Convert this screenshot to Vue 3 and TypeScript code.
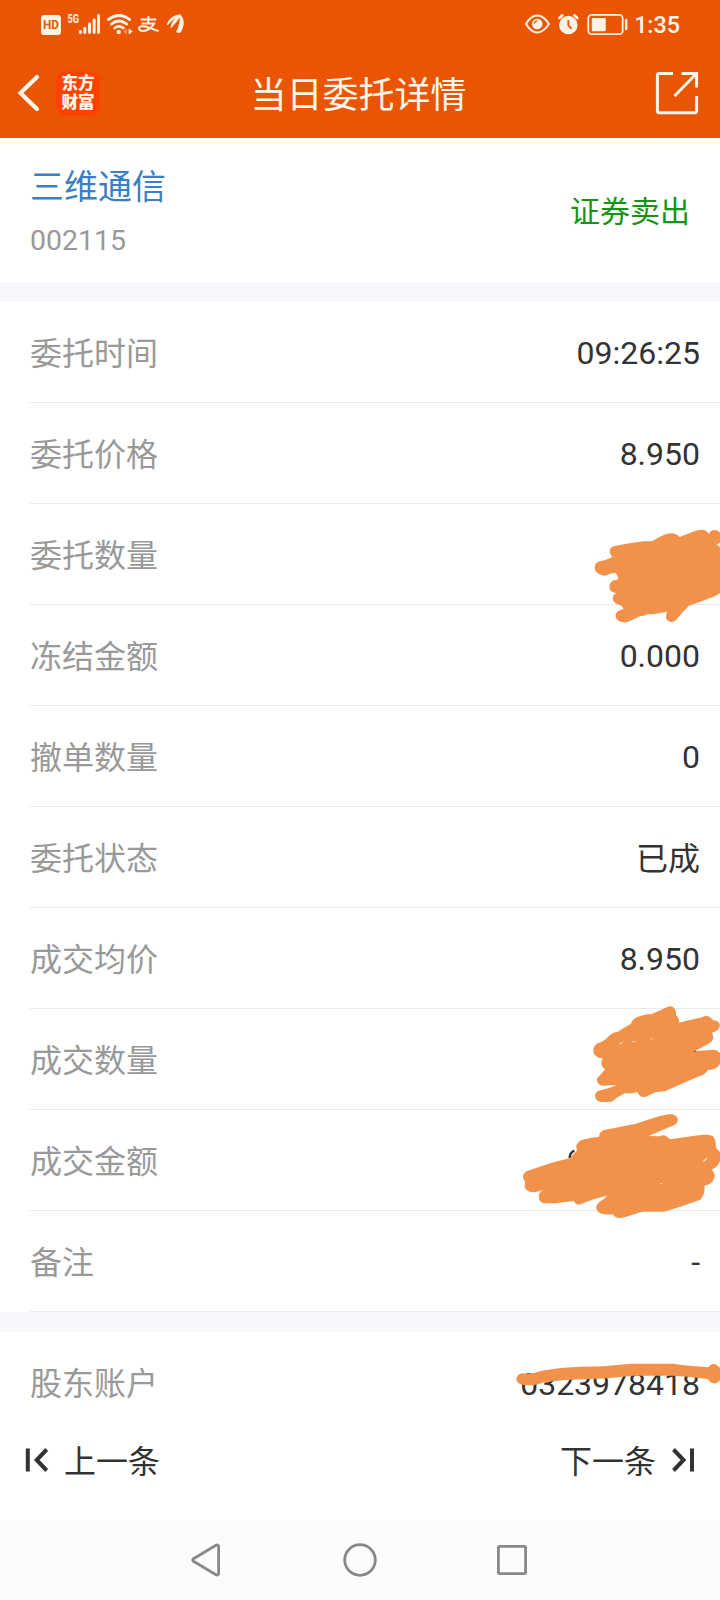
<script setup lang="ts">
interface DetailRow {
  label: string
  value: string
}

const rows: DetailRow[] = [
  { label: '委托时间', value: '09:26:25' },
  { label: '委托价格', value: '8.950' },
  { label: '委托数量', value: '' },
  { label: '冻结金额', value: '0.000' },
  { label: '撤单数量', value: '0' },
  { label: '委托状态', value: '已成' },
  { label: '成交均价', value: '8.950' },
  { label: '成交数量', value: '' },
  { label: '成交金额', value: '' },
  { label: '备注', value: '-' },
]

const isChinese = (text: string): boolean => /[\u4e00-\u9fff]/.test(text)
</script>

<template>
  <div class="screen">
    <header class="top">
      <div class="status">
        <svg class="status-left" width="150" height="24" viewBox="40 12 150 24" fill="none" stroke="#fff3e6">
          <rect x="41" y="15" width="20" height="20" rx="3" fill="#fff3e6" stroke="none" />
          <text x="51" y="29.200" class="hd" text-anchor="middle" textLength="16" lengthAdjust="spacingAndGlyphs">HD</text>
          <text x="67.500" y="22.800" class="five" textLength="11.500" lengthAdjust="spacingAndGlyphs">5G</text>
          <path d="M80.500 31.500v1M85 28.500v4M89.700 24v8.500M94.300 20v12.500M98.700 15.500v17" stroke-width="3" stroke-linecap="round" />
          <path d="M108.500 19.500Q119 11.500 130 19.500M111.700 24Q119 18 127 24M115 28Q119 24.800 123.500 28" stroke-width="2.800" stroke-linecap="round" />
          <circle cx="119" cy="32" r="2.200" fill="#fff3e6" stroke="none" />
          <path d="M123.500 31.500l3.500-3v6z" fill="#ff9568" stroke="none" />
          <path d="M129 28.500v6l4-3z" fill="#fff3e6" stroke="none" />
          <path d="M141 19.500h15.500M148.700 16v7.500M142 23.500h12.500C152.500 27.500 147 31.500 142.500 31C138 30 138.500 26.500 143 26.300C149 26.200 153 30 159 31" stroke-width="2" />
          <path d="M168 25C168 20 174 15.500 180 15C176 17 171.500 20.500 168 25zM171.500 27.500C172.500 21 177 16 181.500 15C178.500 19 176 23 171.500 27.500zM177 32C180 27 181 20 180.800 15C185 20 184.500 27 180.500 32.500z" fill="#fff3e6" stroke-width="1" />
        </svg>
        <svg class="status-right" width="106" height="24" viewBox="524 12 106 24" fill="none" stroke="#fff3e6">
          <path d="M526 24Q531 15.500 537.300 15.500T549 24Q543.500 32.500 537.300 32.500T526 24z" stroke-width="2" />
          <circle cx="537.300" cy="24" r="5.300" fill="#fff3e6" stroke="none" />
          <path d="M534.200 23.500q.5-2.500 3-2.700" stroke="#ea5504" stroke-width="1.200" />
          <circle cx="568.500" cy="25" r="9.300" fill="#fff3e6" stroke="none" />
          <path d="M568.500 20v5.500l3.200 3.200" stroke="#ea5504" stroke-width="1.800" />
          <path d="M559.500 18l3-2.700M577.500 18l-3-2.700" stroke-width="2.600" stroke-linecap="round" />
          <rect x="588.500" y="14.800" width="34.500" height="19.400" rx="3.500" stroke-width="1.800" />
          <rect x="592" y="18" width="14" height="13.200" rx="1" fill="#fff3e6" stroke="none" />
          <path d="M626.500 20v9" stroke-width="2.400" stroke-linecap="round" />
        </svg>
        <span class="clock">1:35</span>
      </div>
      <div class="navbar">
        <div class="nav-left">
          <svg width="24" height="40" viewBox="16 73 24 40" fill="none" stroke="#fff6ec" stroke-width="4.200">
            <path d="M37 77L20.500 93L37 109" stroke-linecap="round" />
          </svg>
          <div class="logo"><span>东方</span><span>财富</span></div>
        </div>
        <h1>当日委托详情</h1>
        <svg class="share" width="44" height="44" viewBox="655 71 44 44" fill="none" stroke="#fff6ec" stroke-width="3">
          <path d="M673 73.500H659q-1.600 0-1.600 1.600v36q0 1.600 1.600 1.600h36q1.600 0 1.600-1.600V96M681.500 73.500h15.100v14M674.500 96l21.500-22" />
        </svg>
      </div>
    </header>

    <section class="stock">
      <div class="identity">
        <div class="name">三维通信</div>
        <div class="code">002115</div>
      </div>
      <div class="side">证券卖出</div>
    </section>

    <section class="list">
      <div v-for="row in rows" :key="row.label" class="row">
        <span class="label">{{ row.label }}</span>
        <span class="value" :class="{ hanzi: isChinese(row.value) }">{{ row.value }}</span>
      </div>
    </section>

    <section class="account">
      <span class="label">股东账户</span>
      <span class="value number">0323978418</span>
    </section>

    <footer class="pager">
      <div class="page-link">
        <svg width="24" height="26" viewBox="25 1447 24 26" fill="none" stroke="#333" stroke-width="4">
          <path d="M27.800 1448.500v23M46.700 1449.500L36.700 1460l10 10.500" />
        </svg>
        <span>上一条</span>
      </div>
      <div class="page-link">
        <span>下一条</span>
        <svg width="24" height="26" viewBox="671 1447 24 26" fill="none" stroke="#333" stroke-width="4">
          <path d="M692 1448.500v23M673.500 1449.500l10 10.500-10 10.500" />
        </svg>
      </div>
    </footer>

    <nav class="system">
      <svg width="720" height="80" viewBox="0 1520 720 80" fill="none" stroke="#888" stroke-width="2.800" stroke-linejoin="round">
        <path d="M193.500 1558.700L216 1545.300q2.600-1 2.600 1.500v26.400q0 2.500-2.600 1.500L193.500 1561.300q-1.600-1.300 0-2.600z" />
        <circle cx="360" cy="1560" r="15.300" />
        <rect x="498.400" y="1546.400" width="27.200" height="27.200" rx="1.500" />
      </svg>
    </nav>

    <!-- Marker strokes hiding private figures -->
    <svg class="marker" width="720" height="1600" viewBox="0 0 720 1600">
      <g transform="translate(580 500) scale(.33333)">
        <path d="M104 138Q150 129 190 124H216Q238 110 258 102Q286 94 299 111L343 94Q375 82 386 102Q394 87 408 91Q420 94 420 100V280Q405 290 389 295L327 317Q305 338 289 359Q275 372 261 360Q254 350 262 335Q240 338 219 343H202Q190 350 181 348L155 361Q137 372 118 364Q103 355 108 340Q112 331 131 327Q124 314 111 313Q98 306 98 294Q99 284 109 279Q90 278 88 261Q88 240 112 239Q119 238 107 218L90 221Q76 230 67 226Q43 220 44 201Q46 184 65 182Q75 182 97 171Q88 162 89 151Q92 140 104 138z" />
        <path class="gap" d="M420 128l-10 6 10 8z" />
      </g>
      <g transform="translate(500 990) scale(.33333)">
        <path d="M392 102Q396 86 420 78Q439 72 456 72L503 50Q523 45 528 66V76Q539 86 537 98Q570 90 606 82Q626 70 639 91Q657 91 660 106Q658 124 636 128Q643 143 636 153Q629 161 583 183L635 180Q650 177 660 190V221Q652 239 624 240Q615 254 600 258Q542 282 495 304Q478 306 466 307L441 319Q420 326 412 306Q400 311 374 310L348 325Q340 337 325 336H300Q284 330 285 315Q288 302 305 300Q325 296 350 285Q327 286 314 287Q294 288 291 272Q289 264 300 256L316 238Q304 232 304 218Q304 210 309 205Q287 205 281 188Q277 169 293 160Q311 155 327 138Q340 126 352 126Q372 113 392 102z" />
        <path d="M209 504q0-16 14-22" fill="none" stroke="#333" stroke-width="7" />
        <path d="M298 433Q304 420 324 418L407 401L477 379L510 372Q532 373 534 391Q530 407 510 410L446 438L480 439Q495 430 509 448L595 436Q621 431 638 438Q648 446 648 474L660 486V512Q656 529 635 539Q652 554 638 574Q630 584 613 587Q618 608 601 629L550 647L492 665H427L376 681Q346 690 339 673Q308 676 294 665Q281 651 298 636Q308 630 323 617Q280 625 242 643Q228 646 221 633L165 640H132Q116 636 116 617Q118 606 130 600L110 605Q88 611 75 595Q72 584 76 576Q65 562 71 552Q76 543 90 540L155 518L210 504L231 481Q223 462 244 450Q270 442 298 440z" />
        <path class="gap" d="M354 161l18-6-8 6zM392 153l18 2-9 2zM449 148l12-6-7 6zM606 515l18-15-8 12zM480 579l7 0-4 5z" />
        <path d="M582 185l2-4 6 3z" class="ink" />
      </g>
      <g transform="translate(500 1300) scale(.33333)">
        <path d="M66 220Q92 224 125 212Q180 202 241 200L310 199L395 191H520Q545 196 569 197L625 202Q633 188 647 193L660 203V241Q647 256 632 247L623 237L572 231L520 227H400L320 235Q295 237 270 237L195 240L130 247Q110 258 70 255Q50 251 49 237Q51 223 66 220z" />
      </g>
    </svg>
  </div>
</template>

<style>
body {
  margin: 0;
}
</style>

<style scoped>
.screen {
  position: relative;
  display: flex;
  flex-direction: column;
  width: 720px;
  height: 1600px;
  overflow: hidden;
  background: #fff;
  color: #333;
  font-family: Roboto, "Noto Sans CJK SC", sans-serif;
}
.top {
  height: 138px;
  background: #ea5504;
  color: #fff6ec;
}
.status {
  display: flex;
  align-items: center;
  height: 48px;
  padding: 0 40px;
}
.status-left {
  margin-right: 335px;
}
.clock {
  padding-top: 2px;
  margin-left: 4px;
  font-size: 23.3px;
  font-weight: 500;
  line-height: 50px;
}
.hd {
  font: 700 12.5px Roboto, sans-serif;
  fill: #ea5504;
  stroke: none;
}
.five {
  font: 700 12.5px Roboto, sans-serif;
  fill: #fff3e6;
  stroke: none;
}
.navbar {
  display: grid;
  grid-template-columns: 1fr auto 1fr;
  align-items: center;
  height: 90px;
  padding: 0 21px 0 16px;
}
.nav-left {
  display: flex;
  align-items: center;
  gap: 16px;
}
.logo {
  display: flex;
  flex-direction: column;
  align-items: center;
  justify-content: center;
  width: 44px;
  height: 45px;
  border-radius: 9px;
  background: #ff4200;
  font-size: 16.5px;
  font-weight: 900;
  line-height: 19px;
}
h1 {
  margin: 0;
  padding: 6px 0 0 2px;
  font-size: 36px;
  font-weight: 400;
  line-height: 50px;
}
.share {
  justify-self: end;
}
.stock {
  display: flex;
  align-items: center;
  justify-content: space-between;
  box-sizing: border-box;
  height: 144px;
  padding: 0 30px;
}
.identity {
  padding-top: 7px;
}
.name {
  color: #3b7fc4;
  font-size: 34px;
  line-height: 54px;
}
.code {
  color: #999;
  font-size: 28.5px;
  line-height: 53px;
}
.side {
  padding-bottom: 3px;
  color: #149414;
  font-size: 30px;
}
.list {
  border-top: 20px solid #f6f7fa;
  border-bottom: 20px solid #f6f7fa;
}
.row {
  display: flex;
  align-items: center;
  justify-content: space-between;
  box-sizing: border-box;
  height: 101px;
  padding: 0 20px 0 30px;
  background: linear-gradient(#e9eaec, #e9eaec) 30px 100% / 100% 1px no-repeat;
}
.label {
  padding-bottom: 4px;
  color: #999;
  font-size: 32px;
}
.value {
  font-size: 32px;
}
.hanzi {
  padding-bottom: 4px;
}
.account {
  display: flex;
  align-items: center;
  justify-content: space-between;
  height: 101px;
  padding: 0 20px 0 30px;
  margin-bottom: -33px;
}
.number {
  padding-top: 2px;
}
.pager {
  display: flex;
  align-items: center;
  justify-content: space-between;
  height: 120px;
  padding: 0 25px;
}
.page-link {
  display: flex;
  align-items: center;
  gap: 15px;
  font-size: 32px;
}
.page-link span {
  padding-bottom: 3px;
}
.system {
  display: flex;
  height: 80px;
  background: #fcfcfc;
}
.marker {
  position: absolute;
  inset: 0;
  fill: #f2924a;
  pointer-events: none;
}
.gap {
  fill: #fff3e6;
}
.ink {
  fill: #333;
}
</style>
